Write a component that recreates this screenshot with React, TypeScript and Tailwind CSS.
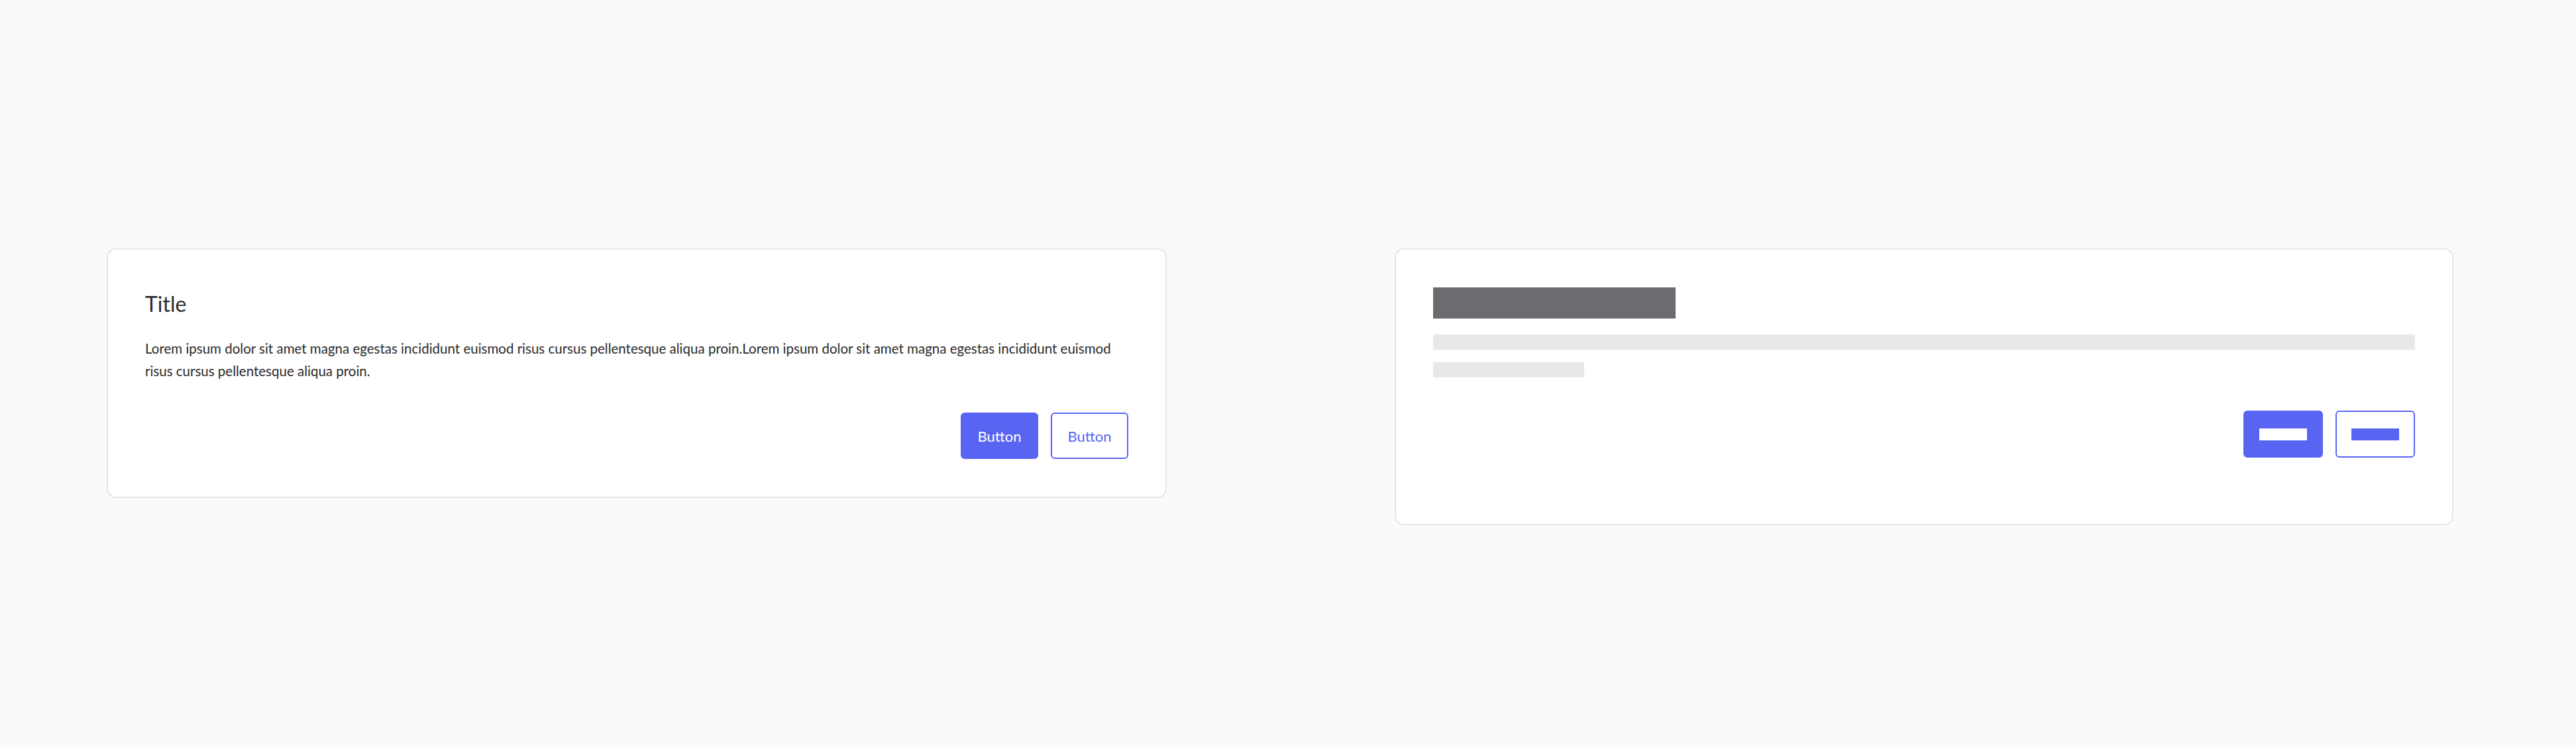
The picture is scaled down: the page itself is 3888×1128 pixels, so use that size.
const text =
  "Lorem ipsum dolor sit amet magna egestas incididunt euismod risus cursus pellentesque aliqua proin.Lorem ipsum dolor sit amet magna egestas incididunt euismod risus cursus pellentesque aliqua proin."

const Card = () => {
  return (
    <div className="w-[1600px] shrink-0 rounded-[14px] border-2 border-[#e6e6e6] bg-white px-[56px] pt-[62px] pb-[57px]">
      <h2 className="text-[32px] leading-[40px] text-[#2b2b2b]">Title</h2>
      <p className="mt-[30px] text-[20.5px] leading-[34px] text-[#2b2b2b]">{text}</p>
      <div className="mt-[46px] flex justify-end gap-[19px]">
        <button className="h-[70px] w-[117px] rounded-[6px] bg-[#5865f2] text-[22px] text-white">
          Button
        </button>
        <button className="h-[70px] w-[117px] rounded-[6px] border-2 border-[#5865f2] bg-white text-[22px] text-[#5865f2]">
          Button
        </button>
      </div>
    </div>
  )
}

const SkeletonCard = () => {
  return (
    <div className="w-[1598px] shrink-0 rounded-[14px] border-2 border-[#e6e6e6] bg-white px-[56px] pt-[57px] pb-[100px]">
      <div className="h-[47px] w-[366px] bg-[#6d6b70]"></div>
      <div className="mt-[24px] h-[23px] w-full bg-[#e8e8e8]"></div>
      <div className="mt-[19px] h-[23px] w-[228px] bg-[#e8e8e8]"></div>
      <div className="mt-[50px] flex justify-end gap-[19px]">
        <div className="flex h-[71px] w-[120px] items-center justify-center rounded-[6px] bg-[#5865f2]">
          <div className="h-[18px] w-[72px] bg-white"></div>
        </div>
        <div className="flex h-[71px] w-[120px] items-center justify-center rounded-[6px] border-2 border-[#5865f2] bg-white">
          <div className="h-[18px] w-[72px] bg-[#5865f2]"></div>
        </div>
      </div>
    </div>
  )
}

export default function App() {
  return (
    <div className="min-h-screen bg-[#fafafa] font-['Lato',sans-serif]">
      <div className="flex items-start gap-[344px] pl-[161px] pt-[375px]">
        <Card />
        <SkeletonCard />
      </div>
    </div>
  )
}
